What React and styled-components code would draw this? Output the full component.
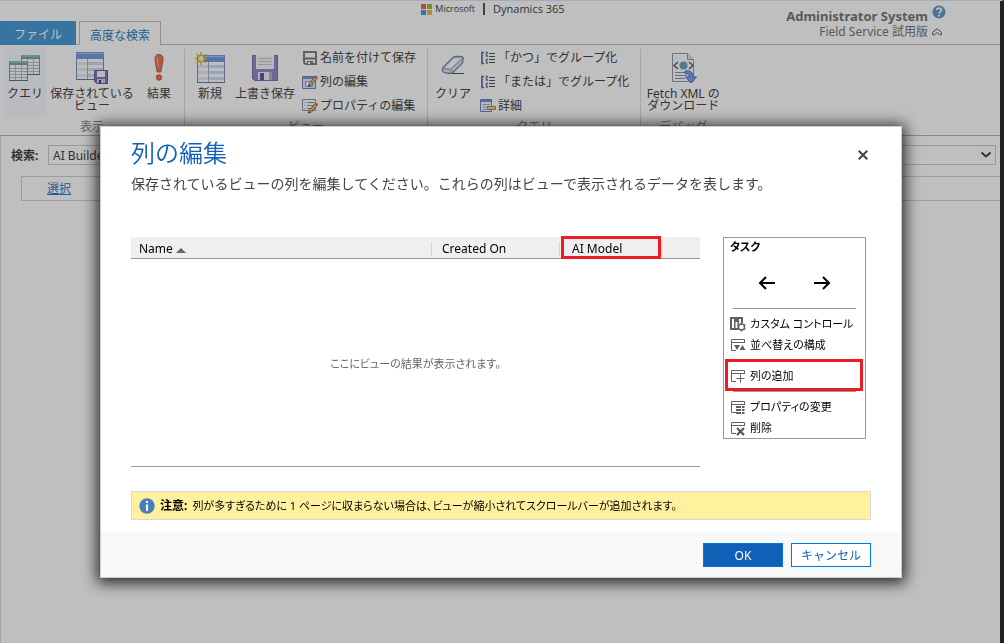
import React from 'react';
import styled, { createGlobalStyle, css } from 'styled-components';

const Global = createGlobalStyle`
  *, *::before, *::after { box-sizing: border-box; }
  html, body, #root { height: 100%; }
  body {
    margin: 0;
    background: #fff;
    color: #444;
    font: 12px/16px "Noto Sans", "Noto Sans CJK JP", sans-serif;
  }
  button, select { font: inherit; color: inherit; margin: 0; border-radius: 0; }
  button { background: none; border: 0; padding: 0; cursor: pointer; }
  svg { display: block; flex: none; }
`;

const compactText = css`
  font-size: 11px;
  font-feature-settings: "palt";
`;

const Page = styled.div`
  min-height: 100%;
  display: flex;
  flex-direction: column;
  border-top: 1px solid #dce6ff;
  border-right: 4px solid #222;
`;

/* ---------- top bar ---------- */

const TopBar = styled.header`
  display: grid;
  grid-template-columns: 1fr auto 1fr;
  height: 44px;
  border-bottom: 1px solid #c2c2c2;
`;

const Tabs = styled.nav`
  align-self: end;
  display: flex;
  gap: 3px;
  margin-bottom: -1px;
`;

const Tab = styled.button`
  height: 24px;
  line-height: 22px;
  padding: ${p => (p.$active ? '3px 10px 0' : '3px 14px 0')};
  ${p =>
    p.$active
      ? css`
          background: #fff;
          color: #2b7fc4;
          border: 1px solid #c2c2c2;
          border-bottom: 0;
        `
      : css`
          background: #4b9bd7;
          color: #fff;
        `}
`;

const Brand = styled.div`
  display: flex;
  align-items: center;
  height: 16px;
  margin-right: 14px;
  color: #444;
  font-family: "Open Sans", sans-serif;
`;

const BrandName = styled.span`
  margin-left: 3px;
  font-size: 9px;
  font-weight: 500;
`;

const Product = styled.span`
  margin-left: 8px;
  padding-left: 8px;
  border-left: 2px solid #555;
  line-height: 12px;
  font-size: 11px;
  font-weight: 500;
`;

const Account = styled.div`
  justify-self: end;
  display: grid;
  grid-template-columns: auto 14px;
  column-gap: 4px;
  align-items: center;
  align-content: start;
  padding: 4px 54px 0 0;
  text-align: right;
  line-height: 15px;
  color: #777;
  > :nth-child(2) { align-self: start; }
`;

const UserName = styled.strong`
  padding-top: 4px;
  font-size: 13px;
`;

/* ---------- ribbon ---------- */

const Ribbon = styled.div`
  display: flex;
  height: 91px;
  border-bottom: 1px solid #b4b4b4;
`;

const Group = styled.section`
  display: flex;
  flex-direction: column;
  justify-content: space-between;
  padding: 0 4px 1px;
`;

const GroupBody = styled.div`
  display: flex;
  gap: 3px;
`;

const GroupTitle = styled.div`
  text-align: center;
  color: #888;
  line-height: 14px;
`;

const Divider = styled.div`
  width: 1px;
  margin: 4px 0;
  background: #dcdcdc;
`;

const BigButton = styled.button`
  width: ${p => p.$width}px;
  height: 70px;
  margin-top: 2px;
  padding-top: 5px;
  display: flex;
  flex-direction: column;
  align-items: center;
  gap: 4px;
  line-height: 12px;
  white-space: nowrap;
  background: ${p => (p.$shaded ? '#f8faff' : 'none')};
`;

const SmallList = styled.div`
  display: flex;
  flex-direction: column;
  align-items: flex-start;
  margin-top: 1px;
  padding-right: 4px;
`;

const SmallButton = styled.button`
  height: 24px;
  display: flex;
  align-items: center;
  gap: 2px;
  padding: 0 3px;
  white-space: nowrap;
`;

/* ---------- query area ---------- */

const Query = styled.main`
  flex: 1;
  border-left: 1px solid #ddd;
  padding-top: 9px;
`;

const SearchRow = styled.div`
  display: flex;
  align-items: center;
  padding: 0 4px 0 10px;
`;

const SearchLabel = styled.label`
  width: 37px;
  padding-top: 2px;
  font-weight: 700;
`;

const SelectBox = styled.div`
  flex: 1;
  display: grid;
  align-items: center;
  > * { grid-area: 1 / 1; }
  > svg { justify-self: end; margin-right: 4px; pointer-events: none; }
`;

const Select = styled.select`
  appearance: none;
  height: 20px;
  padding: 2px 4px 0;
  border: 1px solid #ccc;
  background: #fff;
`;

const FilterRow = styled.div`
  margin: 11px 0 0 20px;
  height: 25px;
  padding-left: 25px;
  border: 1px solid #cdd2e0;
  border-right: 0;
  line-height: 23px;
`;

const SelectLink = styled.a`
  color: #3d78bd;
`;

/* ---------- dialog ---------- */

const Backdrop = styled.div`
  position: fixed;
  inset: 0 4px 0 0;
  padding: 126px 98px 24px 100px;
  background: rgba(0, 0, 0, 0.25);
  overflow: auto;
`;

const Dialog = styled.div`
  border: 1px solid #ccc;
  background: #fff;
  color: #000;
  box-shadow: 0 2px 14px 3px rgba(0, 0, 0, 0.8);
`;

const DialogHead = styled.div`
  display: flex;
  justify-content: space-between;
  align-items: flex-start;
  padding: 8px 30px 0;
`;

const DialogTitle = styled.h1`
  margin: 0;
  font-size: 24px;
  line-height: 36px;
  font-weight: 350;
  color: #1160b7;
`;

const Description = styled.p`
  margin: 3px 0 0;
  font-size: 14px;
  line-height: 20px;
  color: #444;
`;

const CloseButton = styled.button`
  padding: 14px 3px 0;
`;

const Columns = styled.div`
  display: flex;
  gap: 23px;
  padding: 43px 35px 0 30px;
`;

const ViewPane = styled.div`
  flex: 1;
  display: flex;
  flex-direction: column;
  height: 230px;
  border-bottom: 1px solid #999;
`;

const HeaderTable = styled.table`
  width: 100%;
  table-layout: fixed;
  border-collapse: collapse;
  background: #efefef;
  border-bottom: 1px solid #999;
`;

const Col = styled.col`
  width: ${p => p.$width}px;
`;

const HeaderCell = styled.th`
  position: relative;
  height: 21px;
  padding: 3px 0 0;
  text-align: left;
  font-weight: 400;
  font-size: 12px;
  &::after {
    content: "";
    position: absolute;
    inset: ${p => (p.$marked ? '-1px 1px -1px 1px' : '0')};
    border: ${p => (p.$marked ? '3px solid #ed1c24' : '0')};
  }
`;

const CellInner = styled.div`
  display: flex;
  align-items: center;
  gap: 3px;
  height: 14px;
  padding-left: ${p => p.$indent}px;
  border-right: 1px solid #d4d4d4;
`;

const EmptyText = styled.div`
  flex: 1;
  display: grid;
  place-items: center;
  padding-top: 4px;
  color: #666;
  ${compactText}
`;

const TaskPanel = styled.aside`
  width: 143px;
  align-self: flex-start;
  border: 1px solid #999;
`;

const TaskTitle = styled.h2`
  margin: 0;
  padding: 1px 6px;
  line-height: 16px;
  ${compactText}
`;

const Arrows = styled.div`
  display: flex;
  justify-content: center;
  align-items: center;
  gap: 37px;
  height: 47px;
  padding-top: 6px;
`;

const Rule = styled.hr`
  height: 1px;
  border: 0;
  margin: 5px 9px 4px;
  background: #999;
`;

const TaskButton = styled.button`
  position: relative;
  width: 100%;
  height: 21px;
  display: flex;
  align-items: center;
  gap: 4px;
  padding-left: 6px;
  white-space: nowrap;
  ${compactText}
  ${p =>
    p.$marked &&
    css`
      &::after {
        content: "";
        position: absolute;
        inset: -6px 2px -5px 1px;
        border: 3px solid #ed1c24;
      }
    `}
`;

const Notice = styled.div`
  margin: 24px 30px 13px;
  min-height: 29px;
  display: flex;
  align-items: center;
  gap: 5px;
  padding: 0 7px;
  border: 1px solid #d8d8d8;
  background: #fff19d;
`;

const NoticeText = styled.span`
  ${compactText}
`;

const DialogFoot = styled.div`
  display: flex;
  justify-content: flex-end;
  gap: 8px;
  padding: 10px 30px;
  background: #f8f8f8;
`;

const ActionButton = styled.button`
  width: 80px;
  height: 24px;
  padding-top: 2px;
  border: 1px solid #0078d7;
  background: ${p => (p.$primary ? '#1160b7' : '#fff')};
  color: ${p => (p.$primary ? '#fff' : '#1160b7')};
  line-height: 20px;
`;

/* ---------- drawings ---------- */

const MsLogo = () => (
  <svg width="11" height="11" viewBox="0 0 11 11">
    <path fill="#e8694c" d="M0 0h5v5H0z" />
    <path fill="#8cbf45" d="M6 0h5v5H6z" />
    <path fill="#3aa6dc" d="M0 6h5v5H0z" />
    <path fill="#f0bb3c" d="M6 6h5v5H6z" />
  </svg>
);

const HelpIcon = () => (
  <svg width="14" height="14" viewBox="0 0 14 14">
    <circle cx="7" cy="7" r="6.5" fill="#6799c4" />
    <path
      d="M4.700 5.200C4.900 3.800 5.800 3.200 7 3.200c1.300 0 2.300.8 2.300 2C9.300 6.900 7 6.800 7 8.800"
      fill="none"
      stroke="#fff"
      strokeWidth="1.700"
    />
    <path d="M6.100 9.700h1.800v1.700H6.100z" fill="#fff" />
  </svg>
);

const CollapseIcon = () => (
  <svg width="10" height="8" viewBox="0 0 10 8" fill="none" stroke="#5a6270">
    <path d="M.7 4.200 5 .8l4.300 3.400v2.600H7.500L5 4.600 2.500 6.800H.7z" />
  </svg>
);

const MiniTable = ({ x, y }) => (
  <g transform={`translate(${x} ${y})`}>
    <path d="M.5.5h18v19H.5z" fill="#fafcfd" stroke="#8593a3" />
    <path d="M0 0h19v4H0z" fill="#72a9a9" />
    <path d="M1 1h17" stroke="#b5d5d4" />
    <path d="M1 7.500h17M1 10.500h17M1 13.500h17M1 16.500h17M6.500 4v15M12.500 4v15" stroke="#b4c0cb" />
    <path d="M0 19.500h19" stroke="#61738a" />
  </g>
);

const QueryIcon = () => (
  <svg width="32" height="32" viewBox="0 0 32 32">
    <MiniTable x={12} y={3} />
    <MiniTable x={0} y={9} />
  </svg>
);

const SheetBase = ({ x = 0 }) => (
  <g transform={`translate(${x} 0)`}>
    <path d="M.5.500h27v27H.5z" fill="#fbfcff" stroke="#8490b4" />
    <path d="M0 0h28v7H0z" fill="#799be0" />
    <path d="M1 1.500h26" stroke="#adc4f2" />
    <path d="M1 10h10v3H1zM1 16h10v3H1zM1 22h10v3H1z" fill="#e3e9f2" />
    <path d="M12 10h15v3H12zM12 16h15v3H12zM12 22h15v3H12z" fill="#ccdcf0" />
    <path d="M11.500 7v20" stroke="#a7b0c6" />
    <path d="M0 27.500h28" stroke="#6c789f" />
  </g>
);

const SavedViewIcon = () => (
  <svg width="32" height="32" viewBox="0 0 32 32">
    <SheetBase />
    <path d="M18.500 18.500h13v13h-11l-2-2z" fill="#8277c0" stroke="#695fa8" />
    <path d="M21 19h8v6h-8z" fill="#f6f6fc" />
    <path d="M21 27h8v4h-8z" fill="#d4d2e4" />
    <path d="M23 28h2v3h-2z" fill="#42406a" />
  </svg>
);

const ResultIcon = () => (
  <svg width="32" height="32" viewBox="0 0 32 32">
    <path d="M16 2.500c3 0 4.300 2 4 5-.3 4-1.500 8-2.200 12.500h-3.600C13.500 15.500 12.300 11.500 12 7.500c-.3-3 1-5 4-5z" fill="#e8775a" stroke="#c45e44" />
    <path d="M14.500 5c-.8 2 0 6 .8 10" stroke="#f6a48b" strokeWidth="1.500" fill="none" />
    <circle cx="16" cy="25.500" r="2.700" fill="#e8775a" stroke="#c45e44" />
  </svg>
);

const NewIcon = () => (
  <svg width="32" height="32" viewBox="0 0 32 32">
    <g transform="translate(0 3)"><SheetBase x={3} /></g>
    <path d="M7 0v13M1 6.500h12M2.500 2l9 9M11.500 2l-9 9" stroke="#e8bd2e" strokeWidth="1.500" />
    <circle cx="7" cy="6.500" r="2.500" fill="#fff6a8" />
  </svg>
);

const SaveIcon = () => (
  <svg width="32" height="32" viewBox="0 0 32 32">
    <path d="M3.500 3.500h25v25h-23l-2-2z" fill="#978ac9" stroke="#7d70b5" />
    <path d="M7 3h18v14H7z" fill="#f7f7f7" />
    <path d="M9 6.500h14M9 9.500h14M9 12.500h14" stroke="#c8c8d0" />
    <path d="M9 20h14v8H9z" fill="#eeeef4" />
    <path d="M11 21h4v7h-4z" fill="#63589b" />
    <path d="M20 20h3v8h-3z" fill="#b4b0cd" />
  </svg>
);

const SaveAsIcon = () => (
  <svg width="16" height="16" viewBox="0 0 16 16" fill="none" stroke="#808080">
    <path d="M2 2h12v12H3.500L2 12.500z" strokeWidth="2" />
    <path d="M3 8.500h10" strokeWidth="2" />
    <path d="M5 11h6v4H5z" fill="#808080" stroke="none" />
    <path d="M6 12h2v2H6z" fill="#fff" stroke="none" />
  </svg>
);

const Pencil = () => (
  <g>
    <path d="m6.500 12 1-3L13.600 2l2 1.700L9.500 11z" fill="#e9c579" stroke="#8d6d45" />
    <path d="m12.500 3 1.400-1.600 2 1.700-1.400 1.600z" fill="#d5735b" />
    <path d="m6 12.500.8-2 1.300 1.200z" fill="#444" />
  </g>
);

const EditColumnsIcon = () => (
  <svg width="16" height="16" viewBox="0 0 16 16">
    <path d="M.5 2.500h13v12H.5z" fill="#dfe9fb" stroke="#6c86bd" />
    <path d="M1 3h12v2H1z" fill="#7698d9" />
    <path d="M3.500 7.500h7v5h-7z" fill="#fff" stroke="#7fa0dc" />
    <Pencil />
  </svg>
);

const EditPropsIcon = () => (
  <svg width="16" height="16" viewBox="0 0 16 16">
    <path d="M.5 1.500h13v11H.5z" fill="#fafbff" stroke="#8b93a4" />
    <path d="M2.500 4.500h1m-1 3h1m-1 3h1M5 4.500h7M5 7.500h6M5 10.500h4" stroke="#8894ae" />
    <g transform="translate(0 3)"><Pencil /></g>
  </svg>
);

const EraserIcon = () => (
  <svg width="32" height="32" viewBox="0 0 32 32">
    <path d="M15 21.500h12" stroke="#555" />
    <path
      d="M6 15.500 15.500 6c1.200-1.200 2-1.500 3.500-1.500h4.500c2.500 0 3.500 1.800 2.500 4l-.8 3L16 20.200c-1 1-1.800 1.300-3 1.300l-5-.8c-2.500-.4-3.500-3-2-5.200z"
      fill="#dfe6f1"
      stroke="#7a89a3"
      strokeWidth="1.300"
    />
    <path d="M8 15.500 17 6.500h6L14 16z" fill="#fff" />
    <path d="m6.500 16.500 6.500 1c1.500.2 1.500 1.500 1 3M14 17.200 25 7" fill="none" stroke="#8d9cb6" />
  </svg>
);

const GroupIcon = () => (
  <svg width="16" height="16" viewBox="0 0 16 16" fill="none">
    <path d="M4 2.500H2v11h2" stroke="#5a6f9c" strokeWidth="1.600" />
    <path d="M8 2.500H6.500v3.500H8M8 9.500H6.500v3.500H8" stroke="#6f7fa2" strokeWidth="1.400" />
    <path d="M9 3.500h6M9 6.500h6M9 9.500h6M9 12.500h6" stroke="#555" />
  </svg>
);

const DetailIcon = () => (
  <svg width="16" height="16" viewBox="0 0 16 16">
    <path d="M.5 1.500h11v12H.5z" fill="#f4f8ff" stroke="#6b83b8" />
    <path d="M1 2h10v2H1z" fill="#7595d6" />
    <path d="M2.500 6.500h7M2.500 11.500h4" stroke="#96a9cd" />
    <path d="M2.500 9h5" stroke="#96a9cd" />
    <path d="M7.500 8.500h8v3h-8z" fill="#f0d98c" stroke="#a58c45" />
  </svg>
);

const FetchXmlIcon = () => (
  <svg width="32" height="32" viewBox="0 0 32 32">
    <path d="M5.500 1.500h15l6 6v22h-21z" fill="#fcfcfe" stroke="#939aaa" />
    <path d="M20.500 1.500v6h6" fill="#e5e9f1" stroke="#939aaa" />
    <path d="m11 10-4 3.500 4 3.500M22 10l4 3.500-4 3.500" fill="none" stroke="#555" strokeWidth="1.300" />
    <circle cx="16.500" cy="13.500" r="4" fill="#6c9edc" />
    <path d="M14 11.500c2-2 4 0 3 1.500s-3 .5-2 3c-2-.5-2.500-3-1-4.500zM18.500 14.500l1.500-1c0 2-1 3-2 3.200z" fill="#63b66c" />
    <path d="M8 20.500h12M8 23.500h12M8 26.500h10" stroke="#7f93c4" />
    <path d="M18 19c5-1 8 1 8 6h3.500l-5.500 6-5.500-6H22c0-2.500-1-3.500-4-3.500z" fill="#7ea2e8" stroke="#5778bd" />
  </svg>
);

const Chevron = () => (
  <svg width="12" height="8" viewBox="0 0 12 8" fill="none" stroke="#444" strokeWidth="2">
    <path d="m1.500 1.500 4.500 4 4.500-4" />
  </svg>
);

const CloseIcon = () => (
  <svg width="10" height="12" viewBox="0 0 10 12" fill="none" stroke="#444" strokeWidth="2">
    <path d="m.7 1.700 8.600 8.600M9.300 1.700.7 10.300" />
  </svg>
);

const SortIcon = () => (
  <svg width="10" height="9" viewBox="0 0 10 9">
    <path d="M5 4l5 5H0z" fill="#666" />
  </svg>
);

const Arrow = ({ d }) => (
  <svg width="18" height="14" viewBox="0 0 18 14" fill="none" stroke="#000" strokeWidth="2">
    <path d={d} />
  </svg>
);

const ControlIcon = () => (
  <svg width="16" height="16" viewBox="0 0 16 16">
    <path d="M0 1h13v6h-2V5.500H9V8H8v6H0z" fill="#606060" />
    <path d="M2 3h2v9H2zM5.500 6h2v6h-2z" fill="#fff" />
    <path d="M9 3h2v3H9z" fill="#fff" />
    <circle cx="11.500" cy="11" r="3" fill="#fff" stroke="#606060" strokeWidth="1.400" />
    <path d="M11.500 6.500V8m0 6v1.500M7.500 8.700l1.400.8m5.200 3 1.400.8m0-4.600-1.400.8m-5.200 3-1.400.8" stroke="#606060" strokeWidth="1.400" />
  </svg>
);

const Frame = ({ children }) => (
  <svg width="16" height="16" viewBox="0 0 16 16">
    <path d="M14.500 6V2.500H1.500v11H6M1.500 5.500h13" fill="none" stroke="#606060" />
    {children}
  </svg>
);

const SortConfigIcon = () => (
  <Frame>
    <path d="M4 8h6l-3 5zM9.500 13h6l-3-5z" fill="#606060" />
  </Frame>
);

const AddColumnIcon = () => (
  <Frame>
    <path d="M10.500 6.500v8M6.500 10.500h8" stroke="#606060" />
  </Frame>
);

const ChangePropsIcon = () => (
  <Frame>
    <path d="M6 7h5v2H6zM6 10h5v2H6zM6 13h5v2H6zM12 7h2.500v2H12zM12 10h2.500v2H12zM12 13h2.500v2H12z" fill="#606060" />
  </Frame>
);

const DeleteIcon = () => (
  <Frame>
    <path d="m7 8 7 7M14 8l-7 7" stroke="#505050" strokeWidth="2" />
  </Frame>
);

const InfoIcon = () => (
  <svg width="16" height="16" viewBox="0 0 16 16">
    <circle cx="8" cy="8" r="7.700" fill="#4a7ebb" />
    <path d="M7 3h2v2H7zM7 6.500h2V13H7z" fill="#fff" />
  </svg>
);

/* ---------- page ---------- */

export default function App() {
  return (
    <>
      <Global />
      <Page>
        <TopBar>
          <Tabs>
            <Tab>ファイル</Tab>
            <Tab $active>高度な検索</Tab>
          </Tabs>
          <Brand>
            <MsLogo />
            <BrandName>Microsoft</BrandName>
            <Product>Dynamics 365</Product>
          </Brand>
          <Account>
            <UserName>Administrator System</UserName>
            <HelpIcon />
            <span>Field Service 試用版</span>
            <CollapseIcon />
          </Account>
        </TopBar>

        <Ribbon>
          <Group>
            <GroupBody>
              <BigButton $width={42} $shaded><QueryIcon />クエリ</BigButton>
              <BigButton $width={86}>
                <SavedViewIcon />
                <span>保存されている<br />ビュー</span>
              </BigButton>
              <BigButton $width={42}><ResultIcon />結果</BigButton>
            </GroupBody>
            <GroupTitle>表示</GroupTitle>
          </Group>
          <Divider />
          <Group>
            <GroupBody>
              <BigButton $width={42}><NewIcon />新規</BigButton>
              <BigButton $width={62}><SaveIcon />上書き保存</BigButton>
              <SmallList>
                <SmallButton><SaveAsIcon />名前を付けて保存</SmallButton>
                <SmallButton><EditColumnsIcon />列の編集</SmallButton>
                <SmallButton><EditPropsIcon />プロパティの編集</SmallButton>
              </SmallList>
            </GroupBody>
            <GroupTitle>ビュー</GroupTitle>
          </Group>
          <Divider />
          <Group>
            <GroupBody>
              <BigButton $width={42}><EraserIcon />クリア</BigButton>
              <SmallList>
                <SmallButton><GroupIcon />「かつ」でグループ化</SmallButton>
                <SmallButton><GroupIcon />「または」でグループ化</SmallButton>
                <SmallButton><DetailIcon />詳細</SmallButton>
              </SmallList>
            </GroupBody>
            <GroupTitle>クエリ</GroupTitle>
          </Group>
          <Divider />
          <Group>
            <GroupBody>
              <BigButton $width={76}>
                <FetchXmlIcon />
                <span>Fetch XML の<br />ダウンロード</span>
              </BigButton>
            </GroupBody>
            <GroupTitle>デバッグ</GroupTitle>
          </Group>
        </Ribbon>

        <Query>
          <SearchRow>
            <SearchLabel htmlFor="entity">検索:</SearchLabel>
            <SelectBox>
              <Select id="entity"><option>AI Builder</option></Select>
              <Chevron />
            </SelectBox>
          </SearchRow>
          <FilterRow><SelectLink href="#select">選択</SelectLink></FilterRow>
        </Query>
      </Page>

      <Backdrop>
        <Dialog role="dialog" aria-labelledby="dialog-title">
          <DialogHead>
            <div>
              <DialogTitle id="dialog-title">列の編集</DialogTitle>
              <Description>
                保存されているビューの列を編集してください。これらの列はビューで表示されるデータを表します。
              </Description>
            </div>
            <CloseButton aria-label="閉じる"><CloseIcon /></CloseButton>
          </DialogHead>

          <Columns>
            <ViewPane>
              <HeaderTable>
                <colgroup><Col /><Col $width={128} /><Col $width={102} /><Col $width={38} /></colgroup>
                <thead>
                  <tr>
                    <HeaderCell><CellInner $indent={8}>Name <SortIcon /></CellInner></HeaderCell>
                    <HeaderCell><CellInner $indent={10}>Created On</CellInner></HeaderCell>
                    <HeaderCell $marked><CellInner $indent={12}>AI Model</CellInner></HeaderCell>
                    <HeaderCell as="td" />
                  </tr>
                </thead>
              </HeaderTable>
              <EmptyText>ここにビューの結果が表示されます。</EmptyText>
            </ViewPane>

            <TaskPanel>
              <TaskTitle>タスク</TaskTitle>
              <Arrows>
                <button aria-label="左へ移動"><Arrow d="M17 7H2M8 1 2 7l6 6" /></button>
                <button aria-label="右へ移動"><Arrow d="M1 7h15M10 1l6 6-6 6" /></button>
              </Arrows>
              <Rule />
              <TaskButton><ControlIcon />カスタム コントロール</TaskButton>
              <TaskButton><SortConfigIcon />並べ替えの構成</TaskButton>
              <Rule />
              <TaskButton $marked><AddColumnIcon />列の追加</TaskButton>
              <Rule />
              <TaskButton><ChangePropsIcon />プロパティの変更</TaskButton>
              <TaskButton><DeleteIcon />削除</TaskButton>
            </TaskPanel>
          </Columns>

          <Notice>
            <InfoIcon />
            <strong>注意:</strong>
            <NoticeText>列が多すぎるために 1 ページに収まらない場合は、ビューが縮小されてスクロールバーが追加されます。</NoticeText>
          </Notice>

          <DialogFoot>
            <ActionButton $primary>OK</ActionButton>
            <ActionButton>キャンセル</ActionButton>
          </DialogFoot>
        </Dialog>
      </Backdrop>
    </>
  );
}
